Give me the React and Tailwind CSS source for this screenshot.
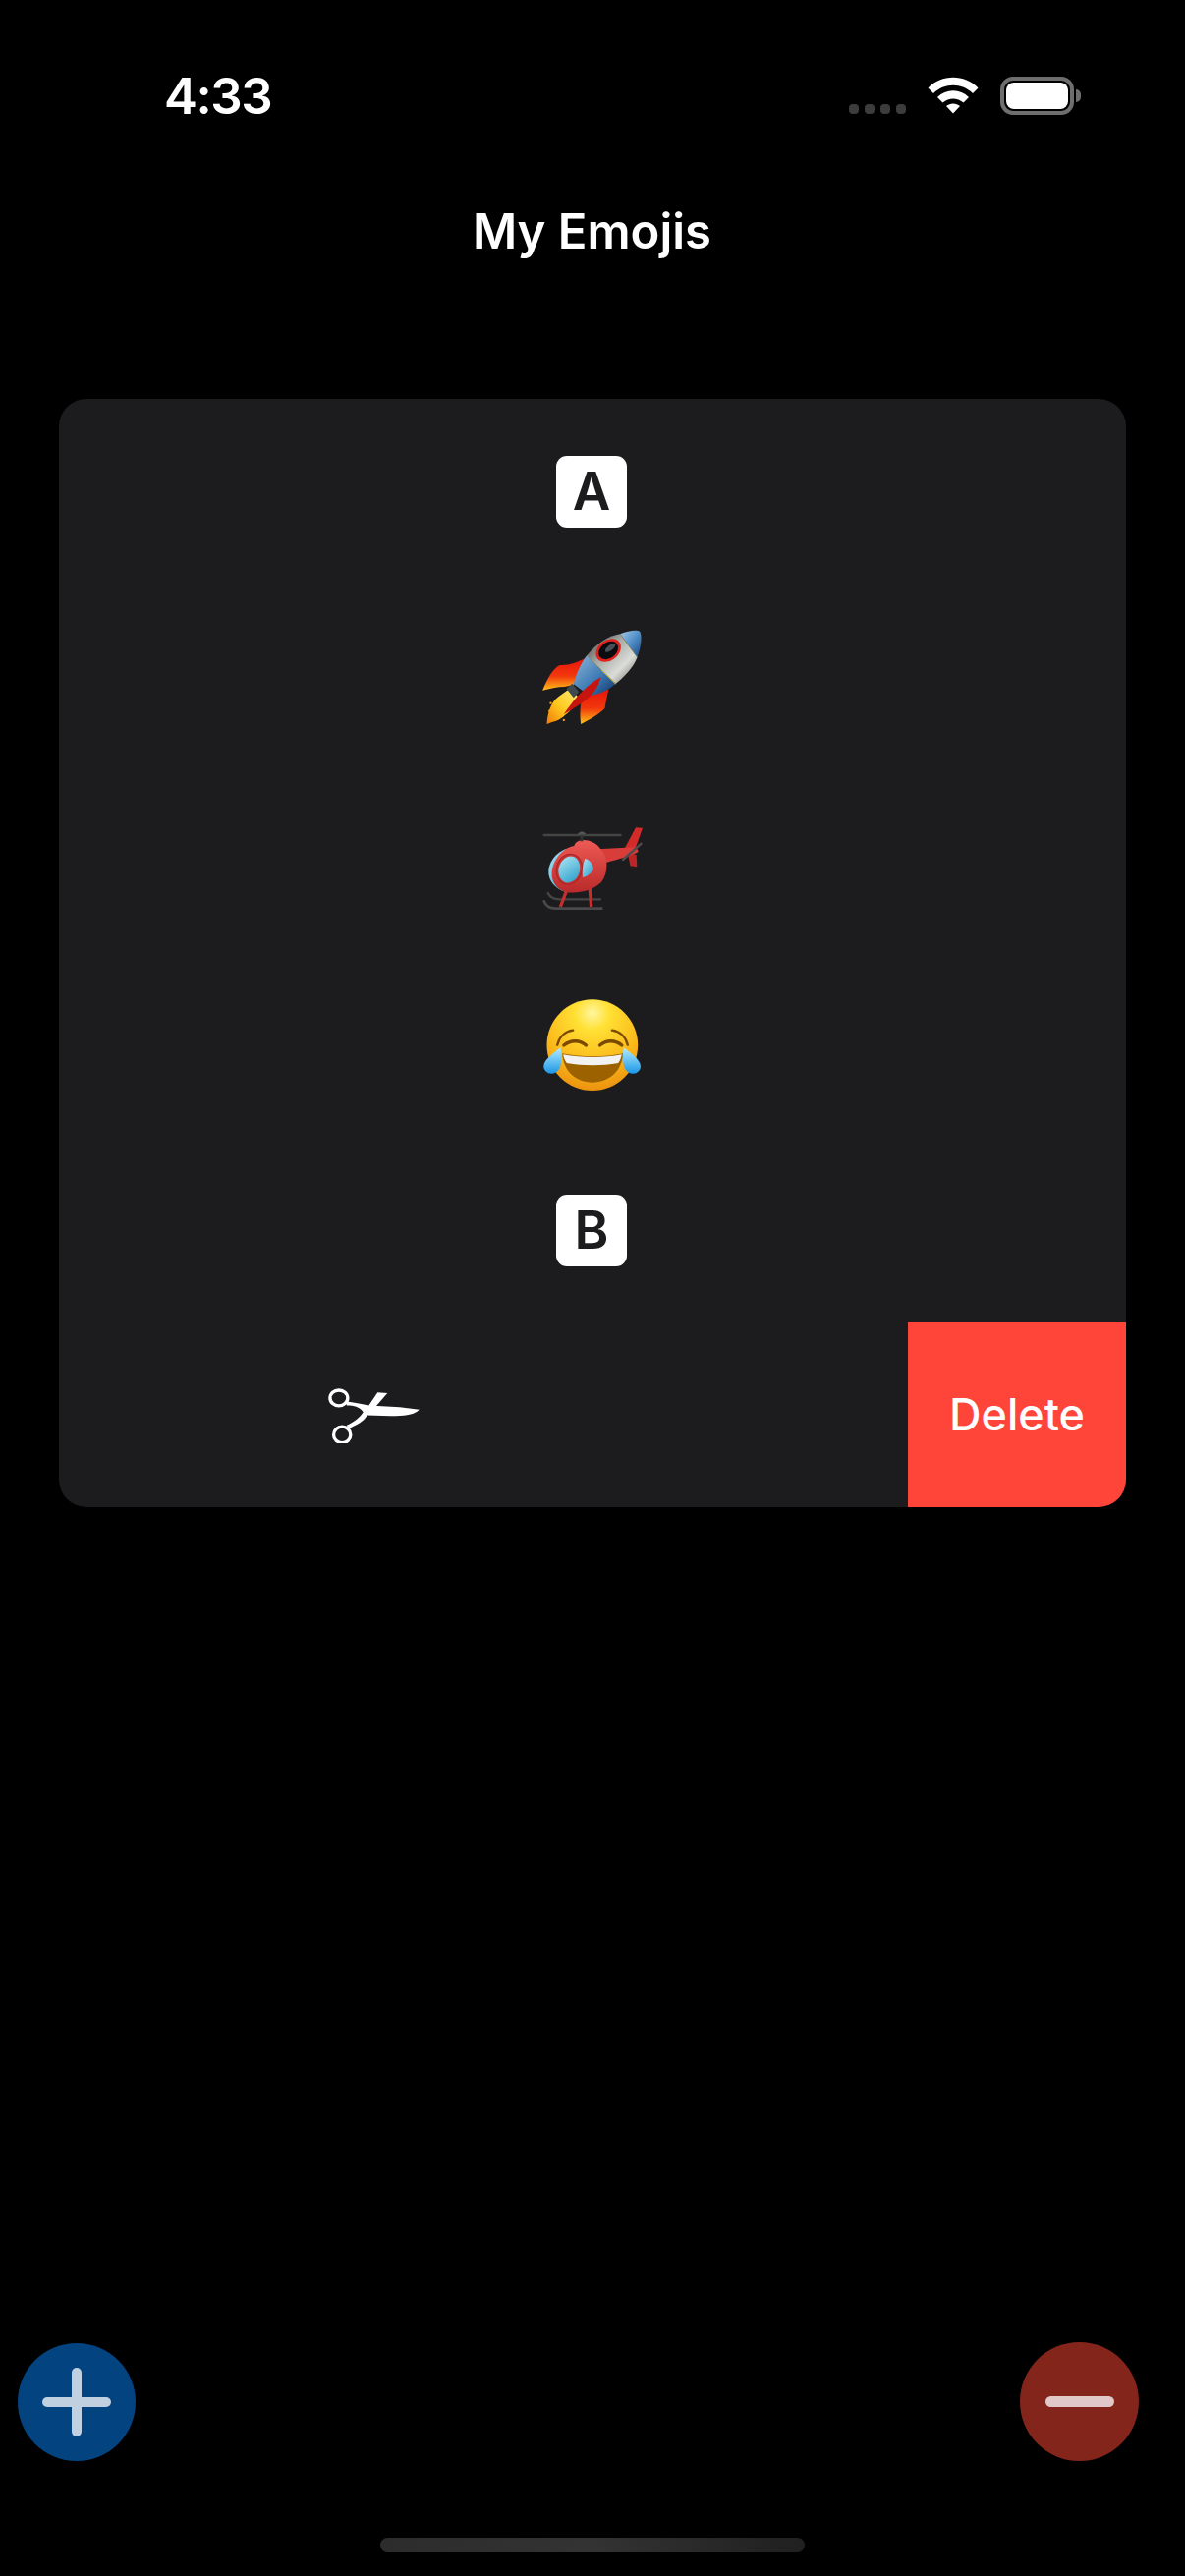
import React from "react";

const font = { fontFamily: "Inter, 'Liberation Sans', sans-serif" };

function Rocket() {
  return (
    <svg width="102" height="98" viewBox="155 632 305 294" className="mt-[3px] mr-[1px]">
      <defs>
        <linearGradient id="rFin" x1="0" y1="0" x2="0" y2="1">
          <stop offset="0" stopColor="#e8140c" />
          <stop offset="0.55" stopColor="#f2380c" />
          <stop offset="1" stopColor="#ffc21a" />
        </linearGradient>
        <linearGradient id="rFlame" x1="1" y1="0" x2="0" y2="1">
          <stop offset="0" stopColor="#fff07a" />
          <stop offset="0.55" stopColor="#ffc81e" />
          <stop offset="1" stopColor="#f07a08" />
        </linearGradient>
        <linearGradient id="rBody" x1="0" y1="0" x2="1" y2="1">
          <stop offset="0" stopColor="#3f3f3d" />
          <stop offset="0.4" stopColor="#a9aca8" />
          <stop offset="0.68" stopColor="#dcddd8" />
          <stop offset="1" stopColor="#5c5e56" />
        </linearGradient>
        <linearGradient id="rBlue" x1="0" y1="0" x2="1" y2="1">
          <stop offset="0" stopColor="#8fb6d8" />
          <stop offset="0.55" stopColor="#3f7cb6" />
          <stop offset="1" stopColor="#123568" />
        </linearGradient>
        <linearGradient id="rNose" x1="0" y1="0" x2="1" y2="1">
          <stop offset="0" stopColor="#a8c9e6" />
          <stop offset="0.5" stopColor="#4f8ec8" />
          <stop offset="1" stopColor="#1a4680" />
        </linearGradient>
      </defs>
      <path d="M155 817 C168 785 185 752 207 740 C235 742 260 732 284 720 L250 800 L222 806 C200 806 175 812 155 817 Z" fill="url(#rFin)" />
      <path d="M272 920 C268 890 270 860 276 838 L357 813 C352 835 348 855 345 872 C325 892 295 908 272 920 Z" fill="url(#rFin)" />
      <path d="M168 920 C170 895 176 855 205 835 L238 812 L266 840 C255 862 240 882 224 892 C208 910 185 912 168 920 Z" fill="url(#rFlame)" />
      <circle cx="180" cy="856" r="3.5" fill="#f5a20f" />
      <circle cx="176" cy="880" r="3.5" fill="#f5a20f" />
      <circle cx="220" cy="908" r="3.5" fill="#f5a20f" />
      <path d="M228 812 L246 796 L266 822 L250 840 Z" fill="#3f4a50" />
      <path d="M290 711 C322 672 358 650 392 645 L444 716 C432 748 405 775 378 797 Z" fill="url(#rBody)" />
      <path d="M392 645 C415 635 442 632 452 637 C460 652 456 682 444 716 Z" fill="url(#rNose)" />
      <path d="M290 711 L378 797 C355 817 325 832 296 832 L250 798 C258 765 272 735 290 711 Z" fill="url(#rBlue)" />
      <path d="M290 711 L378 797 M392 645 L444 716" stroke="#8a8c62" strokeWidth="2.5" fill="none" />
      <path d="M335 755 L378 797" stroke="#e8c51e" strokeWidth="2.5" fill="none" />
      <ellipse cx="356" cy="695" rx="42" ry="31" transform="rotate(-38 356 695)" fill="#e3211c" />
      <ellipse cx="356" cy="695" rx="33" ry="24" transform="rotate(-38 356 695)" fill="#0b0c10" />
      <ellipse cx="362" cy="687" rx="19" ry="8" transform="rotate(-38 362 687)" fill="#4a5058" />
      <path d="M333 777 C322 820 300 845 220 890 C240 860 280 805 333 777 Z" fill="#c8140f" />
    </svg>
  );
}

function Helicopter() {
  return (
    <svg width="104" height="86" viewBox="150 122 312 258" className="mt-[16px] mr-[1px]">
      <defs>
        <linearGradient id="hBody" x1="0" y1="0" x2="0" y2="1">
          <stop offset="0" stopColor="#ee5a55" />
          <stop offset="1" stopColor="#b92a2a" />
        </linearGradient>
        <linearGradient id="hGlass" x1="0" y1="0" x2="1" y2="1">
          <stop offset="0" stopColor="#aee6f5" />
          <stop offset="1" stopColor="#279cc9" />
        </linearGradient>
      </defs>
      <path d="M170 326 C178 342 190 345 205 345 L330 345" stroke="#454545" strokeWidth="7" strokeLinecap="round" fill="none" />
      <path d="M158 351 C165 368 178 373 192 373 L334 373" stroke="#4a4a4a" strokeWidth="8" strokeLinecap="round" fill="none" />
      <path d="M228 316 L208 368" stroke="#c22f2f" strokeWidth="10" fill="none" />
      <path d="M297 302 L302 368" stroke="#c22f2f" strokeWidth="10" fill="none" />
      <path d="M438 126 L459 127 L436 192 L405 188 Z" fill="#d32a2a" />
      <path d="M414 205 L440 208 L442 246 L421 243 Z" fill="#bb2525" />
      <path d="M320 192 L440 186 L446 200 C425 212 385 222 345 234 Z" fill="#d93d3a" />
      <path d="M172 258 C175 222 205 190 250 186 L255 318 L222 322 C195 315 170 290 172 258 Z" fill="url(#hGlass)" />
      <path d="M182 268 C183 225 215 188 250 182 C258 156 305 158 330 190 C355 215 356 265 332 294 C305 320 255 330 222 322 C198 314 181 292 182 268 Z" fill="url(#hBody)" />
      <ellipse cx="235" cy="253" rx="39" ry="47" transform="rotate(16 235 253)" fill="#c73230" stroke="#a82424" strokeWidth="3" />
      <ellipse cx="235" cy="254" rx="32" ry="41" transform="rotate(16 235 254)" fill="url(#hGlass)" />
      <path d="M283 221 C298 224 310 240 309 256 C298 268 288 276 276 278 C274 258 276 238 283 221 Z" fill="url(#hGlass)" />
      <path d="M158 149 L392 149" stroke="#444" strokeWidth="7" strokeLinecap="round" />
      <path d="M260 147 Q273 128 287 147 Z" fill="#555" />
      <rect x="269" y="150" width="8" height="18" fill="#333" />
      <path d="M399 224 L455 175" stroke="#4d4d4d" strokeWidth="7" strokeLinecap="round" />
    </svg>
  );
}

function Laugh() {
  return (
    <svg width="102" height="94" viewBox="155 652 303 282" className="mr-[1px]">
      <defs>
        <radialGradient id="fFace" cx="0.5" cy="0.15" r="0.95">
          <stop offset="0" stopColor="#fff6a0" />
          <stop offset="0.2" stopColor="#ffe033" />
          <stop offset="0.6" stopColor="#fbb81a" />
          <stop offset="1" stopColor="#e5850c" />
        </radialGradient>
        <linearGradient id="fTear" x1="0" y1="0" x2="0" y2="1">
          <stop offset="0" stopColor="#b5ecff" />
          <stop offset="1" stopColor="#1b97e6" />
        </linearGradient>
      </defs>
      <circle cx="306" cy="792" r="139" fill="url(#fFace)" />
      <path d="M199 792 C205 768 222 750 247 747" stroke="#7a4a00" strokeWidth="7" strokeLinecap="round" fill="none" />
      <path d="M366 747 C391 750 408 768 414 792" stroke="#7a4a00" strokeWidth="7" strokeLinecap="round" fill="none" />
      <path d="M219 793 C240 776 268 776 287 793" stroke="#7a4a00" strokeWidth="10" strokeLinecap="round" fill="none" />
      <path d="M329 793 C348 776 376 776 396 793" stroke="#7a4a00" strokeWidth="10" strokeLinecap="round" fill="none" />
      <path d="M214 818 C275 830 340 830 400 818 C396 875 355 906 306 906 C258 906 218 875 214 818 Z" fill="#9c6200" />
      <path d="M217 821 C275 832 340 832 396 821 C393 834 389 843 385 847 C335 856 280 856 228 847 C222 840 219 832 217 821 Z" fill="#f2f2f2" />
      <path d="M209 800 C214 825 212 842 208 858 C202 880 168 890 158 862 C152 840 190 815 209 800 Z" fill="url(#fTear)" />
      <path d="M402 800 C397 825 399 842 403 858 C409 880 443 890 453 862 C459 840 421 815 402 800 Z" fill="url(#fTear)" />
    </svg>
  );
}

function Scissors() {
  return (
    <svg width="95" height="57" viewBox="68 64 285 172" className="mr-[2px]">
      <ellipse cx="103" cy="97" rx="27" ry="24" fill="none" stroke="white" strokeWidth="10" />
      <ellipse cx="113" cy="210" rx="26" ry="25" fill="none" stroke="white" strokeWidth="10" />
      <path d="M128 108 C155 112 175 117 195 120 L290 125 L350 133 C338 148 305 154 262 152 L190 150 C178 172 155 180 132 192 L127 181 C150 170 166 158 178 140 C165 124 150 120 127 120 Z" fill="white" />
      <path d="M222 80 L252 82 L214 126 L192 124 Z" fill="white" />
    </svg>
  );
}

function KeyCap({ children }) {
  return (
    <div className="w-[72px] h-[73px] mr-[2px] rounded-[11px] bg-white flex items-center justify-center text-[#1c1c1e] text-[53px] leading-none font-semibold">
      {children}
    </div>
  );
}

function Row({ children }) {
  return <div className="h-[188px] flex items-center justify-center">{children}</div>;
}

export default function App() {
  return (
    <div className="w-[1206px] h-[2622px] bg-black text-white flex flex-col" style={font}>
      <div className="h-[195px] flex items-start justify-between pl-[167px] pr-[106px] pt-[73px] shrink-0">
        <div className="text-[51px] leading-[50px] font-semibold tracking-[-1.5px]">4:33</div>
        <div className="flex items-start pt-[5px]">
          <div className="flex gap-[6px] pt-[28px] mr-[22px]">
            <div className="w-[10px] h-[10px] rounded-[4px] bg-[#3c3c3c]" />
            <div className="w-[10px] h-[10px] rounded-[4px] bg-[#3c3c3c]" />
            <div className="w-[10px] h-[10px] rounded-[4px] bg-[#3c3c3c]" />
            <div className="w-[10px] h-[10px] rounded-[4px] bg-[#3c3c3c]" />
          </div>
          <svg width="52" height="38" viewBox="0 0 52 38" className="mr-[22px]">
            <path d="M0.5 11.5 C14 -3 38 -3 51.5 11.5 L46 17 C35 6 17 6 6 17 Z" fill="white" />
            <path d="M10 21 C19 12 33 12 42 21 L36.5 26.5 C30 21 22 21 15.5 26.5 Z" fill="white" />
            <path d="M19 30 C23 26.5 29 26.5 33 30 L26 37.5 Z" fill="white" />
          </svg>
          <div className="flex items-center">
            <div className="w-[75px] h-[39px] rounded-[13px] border-[4px] border-[#6e6e6e] p-[2px]">
              <div className="w-full h-full rounded-[8px] bg-white" />
            </div>
            <div className="w-[5px] h-[13px] ml-[2px] bg-[#6e6e6e] rounded-r-full" />
          </div>
        </div>
      </div>

      <div className="h-[211px] shrink-0 flex justify-center">
        <div className="text-[49px] leading-[82px] font-[560] pr-[1px]">My Emojis</div>
      </div>

      <div className="mx-[60px] w-[1086px] h-[1128px] rounded-[28px] bg-[#1c1c1e] overflow-hidden shrink-0 flex flex-col">
        <Row><KeyCap>A</KeyCap></Row>
        <Row><Rocket /></Row>
        <Row><Helicopter /></Row>
        <Row><Laugh /></Row>
        <Row><KeyCap>B</KeyCap></Row>
        <div className="h-[188px] flex relative">
          <div className="flex-1 flex items-center justify-center pr-[222px]">
            <Scissors />
          </div>
          <div className="w-[222px] bg-[#ff453a] flex items-center justify-center text-[45px] font-[450]">
            Delete
          </div>
        </div>
      </div>

      <div className="flex-1 flex items-end justify-between pl-[18px] pr-[47px] pb-[78px]">
        <div className="w-[120px] h-[120px] rounded-full bg-[#03437f] relative flex items-center justify-center">
          <div className="w-[70px] h-[10px] rounded-full bg-[#c0d0e0]" />
          <div className="absolute w-[10px] h-[70px] rounded-full bg-[#c0d0e0]" />
        </div>
        <div className="w-[121px] h-[121px] rounded-full bg-[#84251c] flex items-center justify-center">
          <div className="w-[70px] h-[11px] rounded-full bg-[#e0c9c8]" />
        </div>
      </div>
      <div className="h-[39px] shrink-0 flex justify-center">
        <div className="w-[432px] h-[15px] rounded-full bg-linear-to-r from-[#2c2c2c] via-[#333333] to-[#202020]" />
      </div>
    </div>
  );
}
